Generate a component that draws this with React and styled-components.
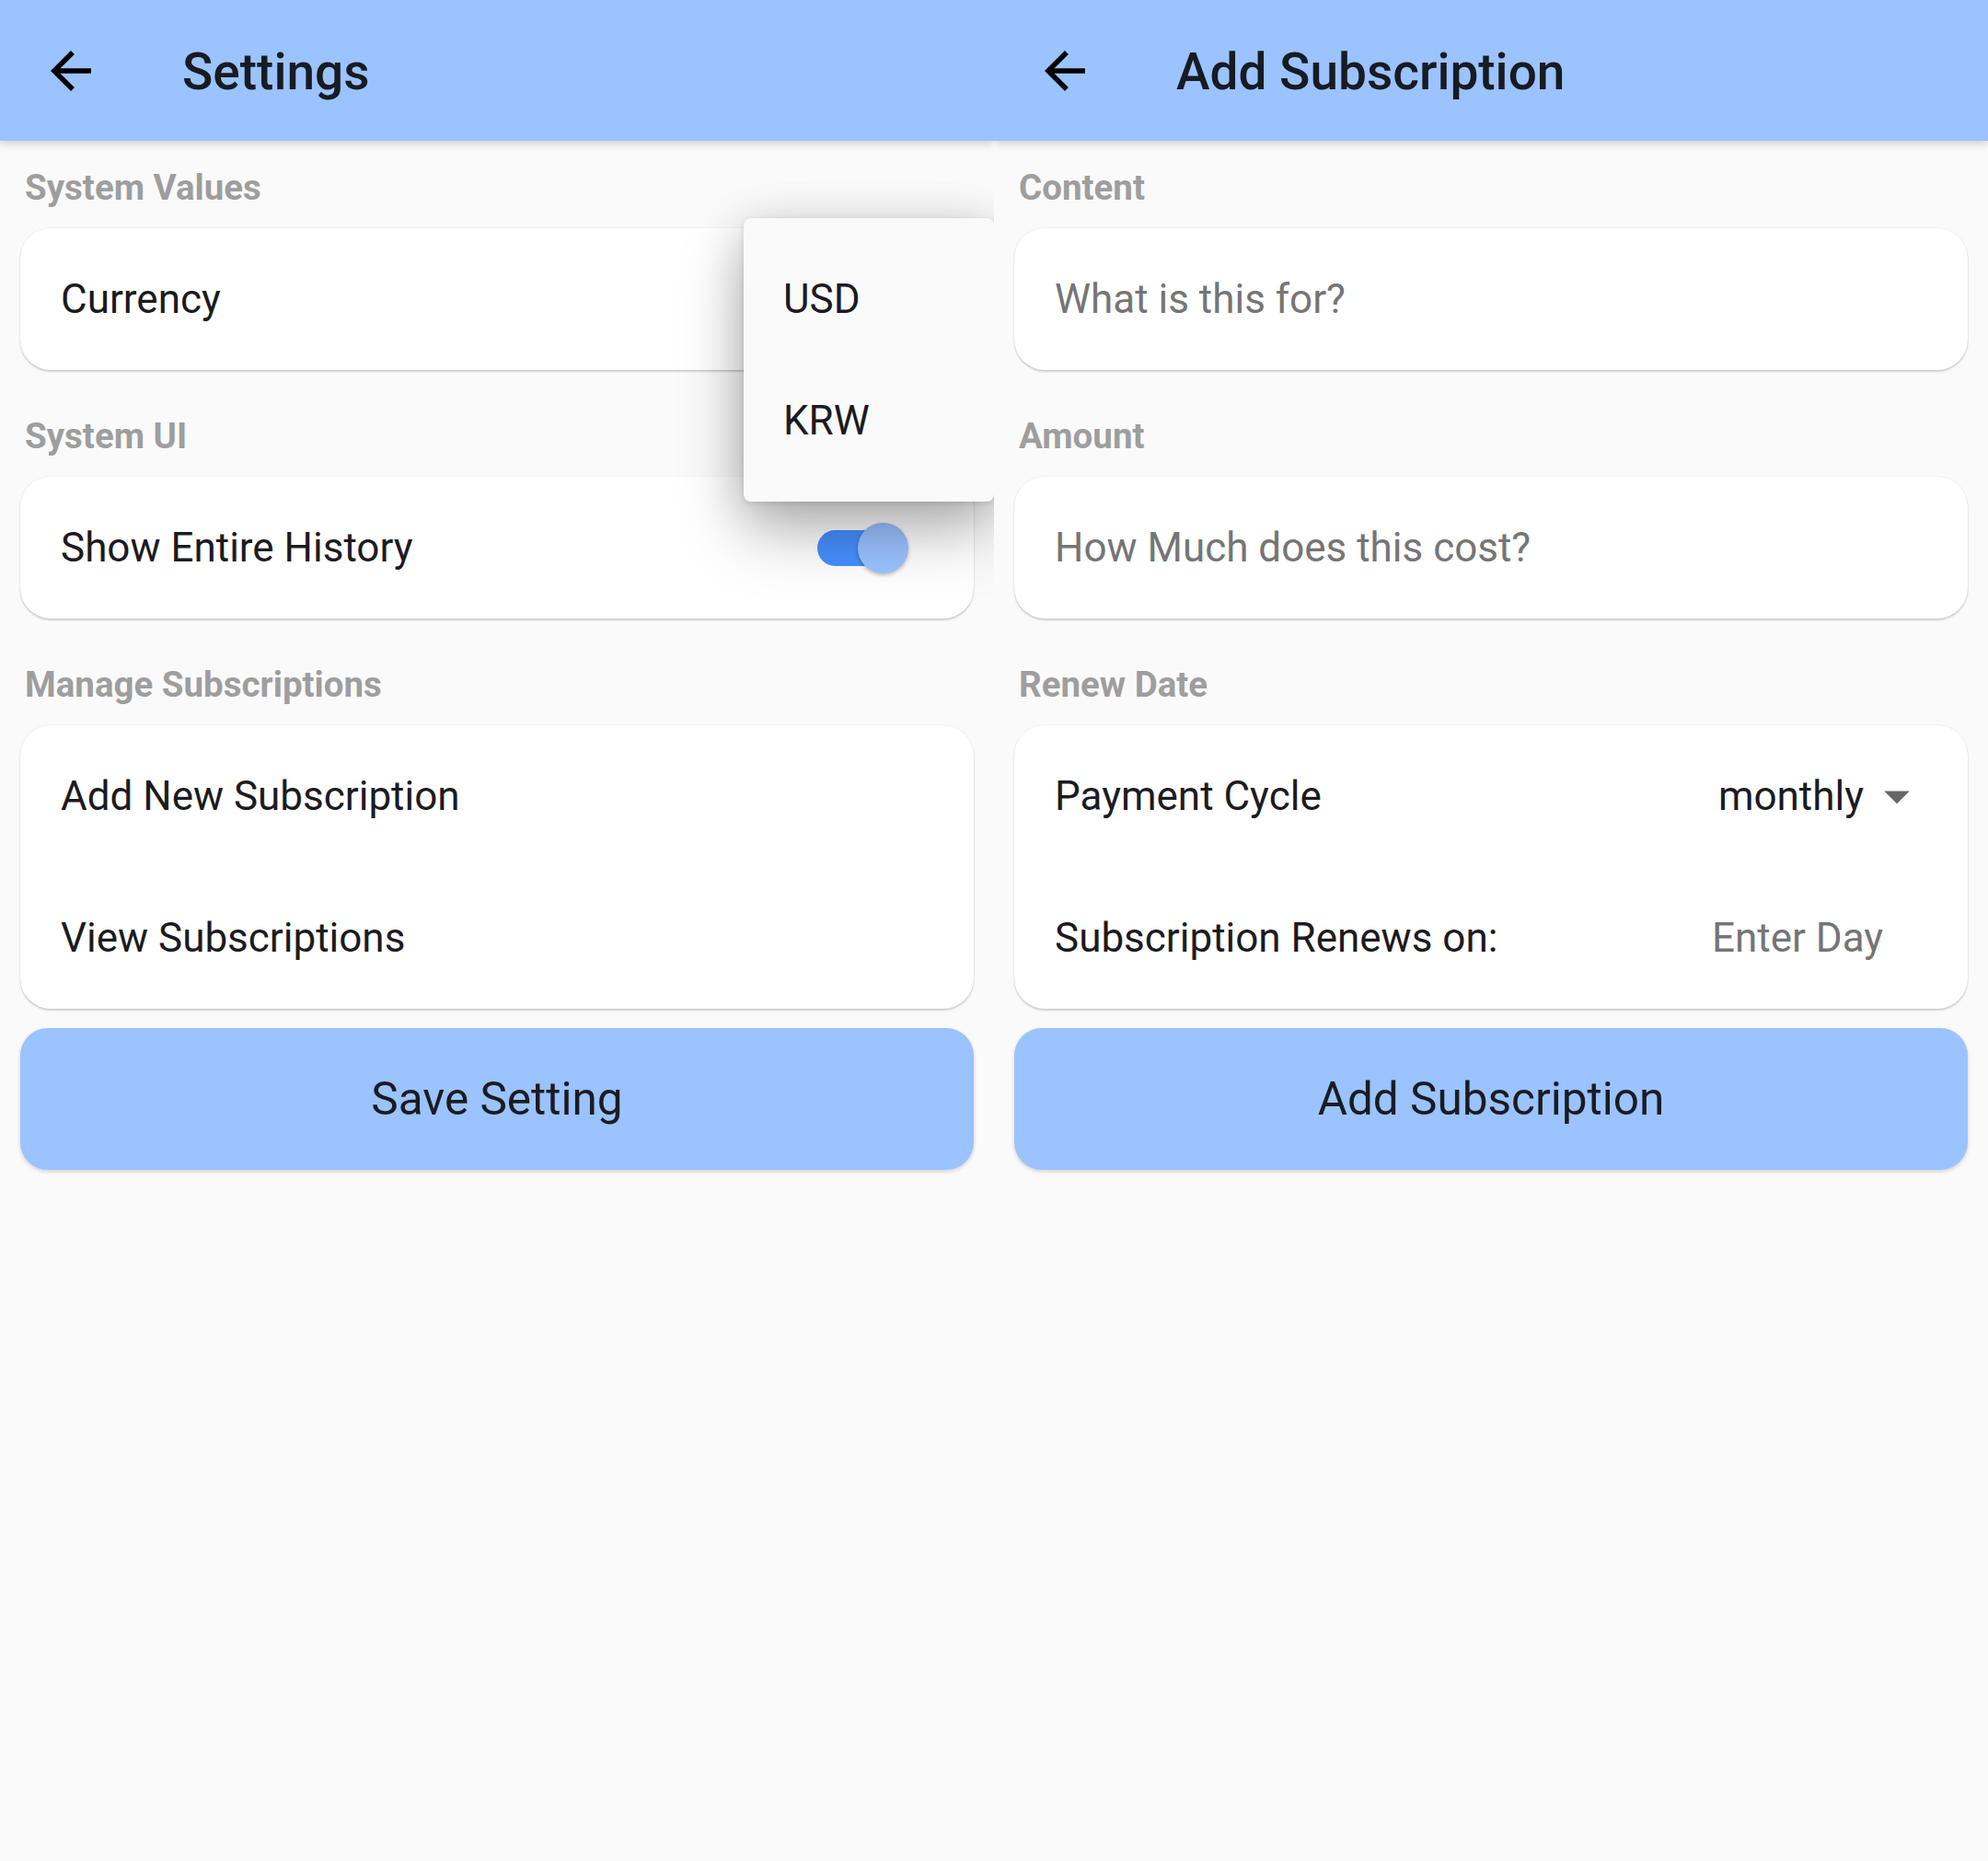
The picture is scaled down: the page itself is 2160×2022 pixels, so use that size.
import React from "react";
import styled, { createGlobalStyle } from "styled-components";

const GlobalStyle = createGlobalStyle`
  body {
    margin: 0;
    background: #fafafa;
    font-family: Roboto, "Noto Sans", "Liberation Sans", sans-serif;
    color: #1c1b1f;
  }
`;

const Screen = styled.div`
  display: flex;
  width: 2160px;
  min-height: 2022px;
  background: #fafafa;
`;

const Panel = styled.div`
  position: relative;
  width: 1080px;
  min-height: 2022px;
  overflow: hidden;
  display: flex;
  flex-direction: column;
`;

const AppBar = styled.header`
  position: relative;
  z-index: 2;
  height: 153px;
  background: #9bc3ff;
  display: flex;
  align-items: center;
  box-shadow: 0 3px 9px rgba(0, 0, 0, 0.18);
`;

const Leading = styled.div`
  width: 154px;
  height: 153px;
  display: flex;
  align-items: center;
  justify-content: center;
`;

const Title = styled.h1`
  margin: 2px 0 0 44px;
  font-size: 55px;
  font-weight: 500;
  color: #171b22;
  letter-spacing: 0;
`;

const Content = styled.div`
  display: flex;
  flex-direction: column;
  padding: 28px 22px 0;
`;

const Sections = styled.div`
  display: flex;
  flex-direction: column;
  gap: 49px;
`;

const Section = styled.section`
  display: flex;
  flex-direction: column;
`;

const Label = styled.div`
  font-size: 38.5px;
  line-height: 46px;
  font-weight: 700;
  color: #9e9e9e;
  padding-left: 5px;
  margin-bottom: 21px;
`;

const Card = styled.div`
  background: #ffffff;
  border-radius: 33px;
  box-shadow: 0 2px 2px rgba(0, 0, 0, 0.16), 0 0 2px rgba(0, 0, 0, 0.1);
  display: flex;
  flex-direction: column;
`;

const Tile = styled.div`
  height: 154px;
  padding: 0 44px;
  display: flex;
  align-items: center;
  justify-content: space-between;
  font-size: 44px;
  color: ${(p) => (p.$hint ? "#757575" : "#1c1b1f")};
`;

const Trailing = styled.div`
  display: flex;
  align-items: center;
  gap: 3px;
`;

const HintBox = styled.div`
  width: 234px;
  color: #757575;
`;

const Track = styled.div`
  position: relative;
  width: 91px;
  height: 39px;
  border-radius: 20px;
  background: #4790ff;
  margin-right: 35px;
`;

const Thumb = styled.div`
  position: absolute;
  right: -8px;
  top: -8px;
  width: 55px;
  height: 55px;
  border-radius: 50%;
  background: #9bc3ff;
  box-shadow: 0 2px 4px rgba(0, 0, 0, 0.25);
`;

const ActionButton = styled.button`
  margin-top: 21px;
  height: 154px;
  border: none;
  border-radius: 30px;
  background: #9bc3ff;
  color: #1a1c22;
  font-family: Roboto, "Liberation Sans", sans-serif;
  font-size: 49.5px;
  box-shadow: 0 2px 4px rgba(0, 0, 0, 0.16);
`;

const Menu = styled.div`
  position: absolute;
  z-index: 1;
  left: 808px;
  top: 237px;
  width: 272px;
  padding: 22px 0;
  background: #fafafa;
  border-radius: 8px;
  box-shadow: 0 34px 70px rgba(0, 0, 0, 0.26), 0 8px 50px rgba(0, 0, 0, 0.16),
    0 2px 6px rgba(0, 0, 0, 0.1);
`;

const MenuItem = styled.div`
  height: 132px;
  padding-left: 43px;
  display: flex;
  align-items: center;
  font-size: 44px;
  color: #1c1b1f;
`;

const BackIcon = () => (
  <svg width="66" height="66" viewBox="0 0 24 24">
    <path
      fill="#000"
      d="M20 11H7.83l5.59-5.59L12 4l-8 8 8 8 1.41-1.41L7.83 13H20v-2z"
    />
  </svg>
);

const DropIcon = () => (
  <svg width="66" height="66" viewBox="0 0 24 24">
    <path fill="#666666" d="M7 10l5 5 5-5z" />
  </svg>
);

const Header = ({ title }) => (
  <AppBar>
    <Leading>
      <BackIcon />
    </Leading>
    <Title>{title}</Title>
  </AppBar>
);

const App = () => {
  return (
    <>
      <GlobalStyle />
      <Screen>
        <Panel>
          <Header title="Settings" />
          <Content>
            <Sections>
              <Section>
                <Label>System Values</Label>
                <Card>
                  <Tile>Currency</Tile>
                </Card>
              </Section>
              <Section>
                <Label>System UI</Label>
                <Card>
                  <Tile>
                    Show Entire History
                    <Track>
                      <Thumb />
                    </Track>
                  </Tile>
                </Card>
              </Section>
              <Section>
                <Label>Manage Subscriptions</Label>
                <Card>
                  <Tile>Add New Subscription</Tile>
                  <Tile>View Subscriptions</Tile>
                </Card>
              </Section>
            </Sections>
            <ActionButton>Save Setting</ActionButton>
          </Content>
          <Menu>
            <MenuItem>USD</MenuItem>
            <MenuItem>KRW</MenuItem>
          </Menu>
        </Panel>

        <Panel>
          <Header title="Add Subscription" />
          <Content>
            <Sections>
              <Section>
                <Label>Content</Label>
                <Card>
                  <Tile $hint>What is this for?</Tile>
                </Card>
              </Section>
              <Section>
                <Label>Amount</Label>
                <Card>
                  <Tile $hint>How Much does this cost?</Tile>
                </Card>
              </Section>
              <Section>
                <Label>Renew Date</Label>
                <Card>
                  <Tile>
                    Payment Cycle
                    <Trailing>
                      monthly
                      <DropIcon />
                    </Trailing>
                  </Tile>
                  <Tile>
                    Subscription Renews on:
                    <HintBox>Enter Day</HintBox>
                  </Tile>
                </Card>
              </Section>
            </Sections>
            <ActionButton>Add Subscription</ActionButton>
          </Content>
        </Panel>
      </Screen>
    </>
  );
};

export default App;
